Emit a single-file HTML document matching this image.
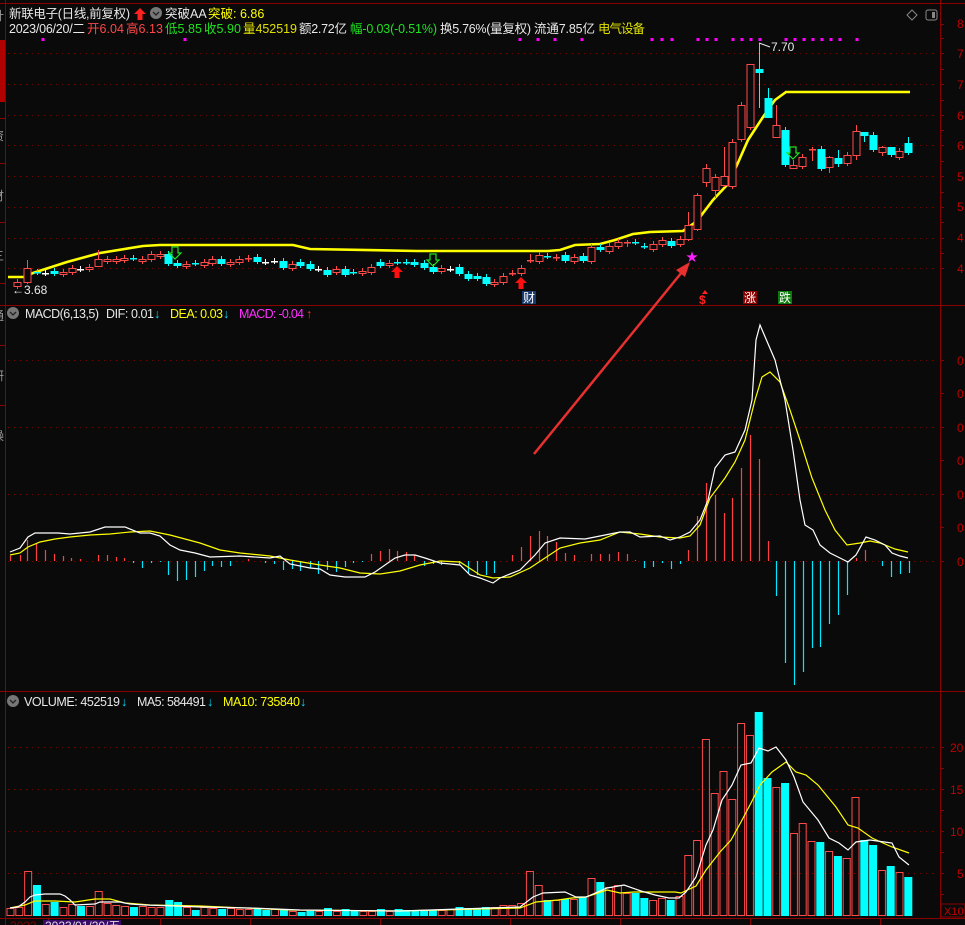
<!DOCTYPE html>
<html><head><meta charset="utf-8"><style>
html,body{margin:0;padding:0;background:#0a0a0a;}
svg{display:block;}
text{font-family:"Liberation Sans","Noto Sans CJK SC",sans-serif;}
</style></head><body>
<svg id="s" width="965" height="925" viewBox="0 0 965 925" xmlns="http://www.w3.org/2000/svg">
<rect width="965" height="925" fill="#0a0a0a"/>
<g id="grid"></g>
<g id="main"></g>
<line x1="0" y1="3.5" x2="965" y2="3.5" stroke="#8b0000"/>
<line x1="5.5" y1="0" x2="5.5" y2="925" stroke="#8b0000"/>
<line x1="940.5" y1="0" x2="940.5" y2="918" stroke="#8b0000"/>
<line x1="0" y1="305.5" x2="965" y2="305.5" stroke="#8b0000"/>
<line x1="0" y1="691.5" x2="965" y2="691.5" stroke="#8b0000"/>
<line x1="0" y1="918.5" x2="965" y2="918.5" stroke="#8b0000"/>
<rect x="0" y="40" width="5" height="62" fill="#b00000"/>
<g fill="#8b0000"><rect x="0" y="118" width="5" height="1"/><rect x="0" y="163" width="5" height="1"/><rect x="0" y="222" width="5" height="1"/><rect x="0" y="283" width="5" height="1"/><rect x="0" y="345" width="5" height="1"/><rect x="0" y="405" width="5" height="1"/></g>
<g fill="#999" font-size="12"><text x="-8" y="20">针</text><text x="-8" y="140">资</text><text x="-8" y="200">财</text><text x="-8" y="260">三</text><text x="-8" y="320">通</text><text x="-8" y="380">研</text><text x="-8" y="440">操</text></g>
<g font-size="12.5">
<text x="9" y="18" fill="#e8e8e8" textLength="121">新联电子(日线,前复权)</text>
<path d="M140 8 L146 14 L142.5 14 L142.5 20 L137.5 20 L137.5 14 L134 14 Z" fill="#ff2020"/>
<circle cx="156" cy="13" r="6" fill="#777"/><path d="M153 12 L156 15 L159 12" stroke="#222" stroke-width="1.3" fill="none"/>
<text x="165" y="18" fill="#e8e8e8">突破AA</text>
<text x="208" y="18" fill="#ffff00">突破: 6.86</text>
<text y="33"><tspan x="9" fill="#e8e8e8" textLength="76">2023/06/20/二</tspan><tspan x="87" fill="#ff4848" textLength="37">开6.04</tspan><tspan x="126" fill="#ff4848" textLength="37">高6.13</tspan><tspan x="165" fill="#20e020" textLength="37">低5.85</tspan><tspan x="204" fill="#20e020" textLength="37">收5.90</tspan><tspan x="243" fill="#e0e000" textLength="54">量452519</tspan><tspan x="299" fill="#e8e8e8" textLength="48">额2.72亿</tspan><tspan x="350" fill="#20e020" textLength="87">幅-0.03(-0.51%)</tspan><tspan x="440" fill="#e8e8e8" textLength="91">换5.76%(量复权)</tspan><tspan x="534" fill="#e8e8e8" textLength="61">流通7.85亿</tspan><tspan x="598" fill="#e0e000" textLength="47">电气设备</tspan></text>
</g>
<path d="M912 10 L917 15 L912 20 L907 15 Z" stroke="#888" fill="none"/>
<rect x="926" y="10" width="11" height="10" rx="2" stroke="#888" fill="none"/><rect x="932" y="12" width="3" height="6" fill="#888"/>
<g font-size="12.5">
<circle cx="13" cy="313" r="6" fill="#777"/><path d="M10 312 L13 315 L16 312" stroke="#222" stroke-width="1.3" fill="none"/>
<text x="25" y="318" fill="#e8e8e8" textLength="74">MACD(6,13,5)</text>
<text x="106" y="318" fill="#e8e8e8" textLength="48">DIF: 0.01</text>
<text x="154" y="318" fill="#00e0ff">↓</text>
<text x="170" y="318" fill="#ffff00" textLength="53">DEA: 0.03</text>
<text x="223" y="318" fill="#00e0ff">↓</text>
<text x="239" y="318" fill="#ff30ff" textLength="65">MACD: -0.04</text>
<text x="306" y="318" fill="#ff3030">↑</text>
<circle cx="13" cy="701" r="6" fill="#777"/><path d="M10 700 L13 703 L16 700" stroke="#222" stroke-width="1.3" fill="none"/>
<text x="24" y="706" fill="#e8e8e8" textLength="96">VOLUME: 452519</text>
<text x="121" y="706" fill="#00e0ff">↓</text>
<text x="137" y="706" fill="#e8e8e8" textLength="69">MA5: 584491</text>
<text x="207" y="706" fill="#00e0ff">↓</text>
<text x="223" y="706" fill="#ffff00" textLength="77">MA10: 735840</text>
<text x="300" y="706" fill="#00e0ff">↓</text>
</g>
<g fill="#c00000" font-size="12" font-family="Liberation Mono, monospace">
<text x="957" y="28">8</text><text x="957" y="58">7</text><text x="957" y="89">7</text><text x="957" y="120">6</text><text x="957" y="150">6</text><text x="957" y="181">5</text><text x="957" y="211">5</text><text x="957" y="242">4</text><text x="957" y="273">4</text>
<text x="957" y="365">0</text><text x="957" y="398">0</text><text x="957" y="432">0</text><text x="957" y="465">0</text><text x="957" y="499">0</text><text x="957" y="532">0</text><text x="957" y="566">0</text>
<text x="950" y="752">20</text><text x="950" y="794">15</text><text x="950" y="836">10</text><text x="957" y="878">5</text>
</g>
<rect x="941" y="904" width="24" height="13" fill="none" stroke="#8b0000"/>
<text x="944" y="915" fill="#c00000" font-size="11">X10</text>
<rect x="43" y="920" width="78" height="5" fill="#3a0a6a"/>
<text x="45" y="930" fill="#ddd" font-size="12">2023/01/20/五</text>
<text x="10" y="930" fill="#800000" font-size="12">2023</text>
<text x="12" y="294" fill="#e8e8e8" font-size="12">←3.68</text>
<path d="M759 43 L770 47" stroke="#e8e8e8"/>
<text x="771" y="51" fill="#e8e8e8" font-size="12">7.70</text>
<rect x="522" y="291" width="14" height="13" fill="#1a3a6a"/><text x="523" y="302" fill="#fff" font-size="12">财</text>
<text x="699" y="304" fill="#ff2020" font-size="12" font-weight="bold">$</text><path d="M705 290 L708 294 L702 294Z" fill="#ff2020"/>
<rect x="743" y="291" width="14" height="13" fill="#8b0000"/><text x="744" y="302" fill="#fff" font-size="12">涨</text>
<rect x="778" y="291" width="14" height="13" fill="#0a7a0a"/><text x="779" y="302" fill="#fff" font-size="12">跌</text>
<text x="686" y="261" fill="#ff20ff" font-size="12">★</text>
<line x1="534" y1="454" x2="682" y2="272" stroke="#e83030" stroke-width="2.5"/>
<path d="M690 262 L676 270 L685 277 Z" fill="#e83030"/>
</svg>
<script>
var s=document.getElementById('main');
var NS='http://www.w3.org/2000/svg';
function el(t,a){var e=document.createElementNS(NS,t);for(var k in a)e.setAttribute(k,a[k]);s.appendChild(e);return e;}
var g=document.getElementById('grid');
function gl(y){var e=document.createElementNS(NS,'line');e.setAttribute('x1',8);e.setAttribute('x2',938);e.setAttribute('y1',y+.5);e.setAttribute('y2',y+.5);e.setAttribute('stroke','#7a0000');e.setAttribute('stroke-dasharray','1 5');g.appendChild(e);}
[53,84,115,145,176,207,238,268,360,427,494,561,747,789,831,873].forEach(gl);
[24,38,53,69,84,100,115,130,145,161,176,192,207,222,238,253,268,360,393,427,460,494,527,561,747,768,789,810,831,852,873,894].forEach(function(y){el('line',{x1:940,x2:944,y1:y+.5,y2:y+.5,stroke:'#8b0000'});});
[48,160,250,380,510,620,750,880].forEach(function(x){el('line',{x1:x+.5,x2:x+.5,y1:918,y2:925,stroke:'#8b0000'});});
[43,185,520,538,555,582,652,662,672,698,707,716,733,742,751,760,786,795,804,813,822,831,840,857].forEach(function(x){el('rect',{x:x-1.5,y:38,width:3,height:3,fill:'#ff00ff'});});
el('polyline',{points:'8,277 25,277 33,273 67,262 100,253 143,246 160,245 293,245 310,249 417,251 548,251 560,250 575,245 600,244 615,240 633,234 650,232 683,231 693,224 700,217 713,200 727,185 737,165 748,140 763,117 775,100 786,92 910,92',fill:'none',stroke:'#ffff00','stroke-width':2.6});
var C=[[17,'r',282,286],[27,'r',268,282,260,284],[37,'c',272,272],[45,'w',273,273],[54,'c',271,273],[63,'r',272,274],[72,'r',268,272],[80,'w',269,269],[89,'r',267,269],[98,'r',259,266,250,267],[107,'r',259,261],[116,'r',259,261],[124,'r',258,260],[133,'c',258,258],[142,'r',259,261],[151,'r',254,259],[160,'r',254,256],[168,'c',254,263],[177,'c',263,265],[186,'r',264,266],[195,'c',263,263],[204,'r',262,265],[212,'r',259,263],[221,'c',259,263],[230,'r',262,264],[239,'r',259,262],[248,'r',258,259],[257,'c',257,261],[265,'w',262,262],[274,'w',261,261],[283,'c',261,267],[292,'r',264,268],[300,'c',262,265],[310,'c',264,268],[318,'w',269,269],[327,'c',270,274],[336,'r',269,272],[345,'c',269,274],[353,'c',272,272],[362,'r',271,273],[371,'r',267,272],[380,'c',262,265],[389,'r',263,265],[397,'c',262,262],[406,'c',262,262],[414,'c',262,264],[424,'c',263,267],[433,'c',267,271],[441,'r',268,271],[450,'w',269,269],[459,'c',267,273],[468,'c',274,278],[477,'c',276,278],
[486,'c',277,283],[494,'r',282,284],[503,'r',276,282],[512,'r',273,273],[521,'r',268,273],[530,'r',260,260,254,263],[539,'r',255,261],[547,'c',256,256],[556,'r',257,258],[565,'c',255,260],[574,'r',257,261],[583,'c',256,260],[591,'r',247,261],[600,'c',247,249],[609,'r',246,251],[618,'r',242,246],[627,'r',242,243,240,247],[635,'c',242,242],[644,'c',246,246],[653,'r',244,249],[662,'r',240,244],[671,'c',241,245],[680,'r',239,244],[688,'r',225,239,212,241],[697,'r',195,229,193,231],[706,'r',168,182,164,187],[715,'r',177,190,174,198],[724,'r',176,185,147,187],[732,'r',142,186],[741,'r',105,139],[750,'r',64,127,64,130],[759,'c',69,72,43,108],[768,'c',98,117,88,117],[776,'r',125,137,105,137],[785,'c',130,164],[793,'r',165,168,160,168],[802,'r',157,166],[812,'r',149,149,147,161],[821,'c',149,168],[829,'r',157,167,156,173],[838,'c',158,163,150,167],[847,'r',155,163],[856,'r',131,155,125,160],[864,'c',132,135,132,142],[873,'c',135,149],[882,'r',147,152,146,156],[891,'c',147,154,147,157],[899,'r',151,157,148,160],[908,'c',143,152,137,155]];
C.forEach(function(d){var x=d[0],t=d[1],a=d[2],b=d[3],wt=d[4]||(a-3),wb=d[5]||(b+3);
var col=t=='r'?'#ff4a4a':(t=='c'?'#00ffff':'#ffffff');
el('line',{x1:x+.5,x2:x+.5,y1:wt,y2:wb,stroke:col});
if(b-a<2){el('rect',{x:x-3,y:a,width:7,height:1.5,fill:col});}
else if(t=='r'){el('rect',{x:x-3,y:a+.5,width:7,height:b-a,fill:'#0a0a0a',stroke:col});}
else{el('rect',{x:x-3.5,y:a,width:8,height:b-a+1,fill:col});}
});
function gdown(x,y){el('path',{d:'M'+(x-3)+' '+y+' h6 v6 h3 l-6 6 l-6 -6 h3 z',fill:'none',stroke:'#20e020','stroke-width':1.2});}
gdown(175,247);gdown(433,254);gdown(793,147);
function rup(x,y){el('path',{d:'M'+x+' '+y+' l6 6 h-3.5 v6 h-5 v-6 h-3.5 z',fill:'#ff1010'});}
rup(397,266);rup(521,277);
var H=[[10,556],[20,555],[27,540],[36,544],[45,550],[54,554],[63,556],[71,558],[80,559],[98,555],[107,555],[116,557],[124,558],[133,563],[142,568],[151,563],[160,562],[168,575],[177,581],[186,580],[195,577],[204,571],[212,566],[221,567],[230,566],[248,559],[265,563],[274,564],[283,570],[292,569],[300,571],[310,568],[318,574],[327,570],[336,572],[345,567],[353,563],[362,562],[371,554],[380,551],[389,549],[397,551],[406,552],[414,555],[424,566],[433,564],[441,565],[450,562],[459,565],[468,573],[477,575],[486,575],[494,573],[512,555],[521,547],[530,536],[539,531],[547,536],[556,542],[565,553],[574,555],[591,554],[600,554],[609,554],[618,552],[627,554],[635,560],[644,568],[653,567],[662,563],[671,569],[680,564],[688,550],[697,516],[706,483],[715,495],[724,513],[732,498],[741,468],[750,435],[759,459],[768,541],[776,596],[785,663],[794,685],[803,672],[812,648],[820,647],[829,624],[838,615],[847,595],[856,558],[865,550],[882,566],[891,577],[900,574],[909,573]];
H.forEach(function(h){var up=h[1]<561;el('line',{x1:h[0]+.5,x2:h[0]+.5,y1:Math.min(h[1],561),y2:Math.max(h[1],561),stroke:up?'#ff4040':'#00e8ff','stroke-width':1.2});});
el('polyline',{points:'10,555 20,553 28,547 40,542 55,539 70,537 90,535 110,534 130,532 150,531 170,535 200,543 220,550 240,553 270,556 290,560 320,565 340,568 360,573 380,574 400,571 420,565 440,561 460,562 480,575 493,578 510,577 530,568 545,558 560,548 580,543 600,540 620,532 640,534 660,537 680,538 690,536 700,525 710,498 725,478 735,462 745,440 755,400 762,377 770,372 780,382 790,410 800,440 812,478 825,510 835,530 847,545 860,543 870,541 880,543 895,549 908,552',fill:'none',stroke:'#ffff00','stroke-width':1.2});
el('polyline',{points:'10,552 20,548 28,537 35,533 58,533 70,534 90,532 105,527 125,527 140,533 150,533 160,536 170,545 180,550 195,553 210,557 240,556 270,558 280,556 290,564 310,568 320,569 330,575 345,577 365,577 375,572 385,565 395,558 405,555 415,555 425,558 440,563 460,565 470,575 480,578 493,583 500,578 520,570 535,555 545,543 560,538 585,539 600,536 620,532 630,532 640,537 660,536 670,540 680,537 690,532 700,520 708,500 715,468 725,455 735,452 745,430 752,400 756,340 760,325 775,360 785,400 793,450 800,500 805,525 813,530 820,545 830,553 840,558 848,562 856,555 866,537 875,540 885,545 892,553 900,556 908,558',fill:'none',stroke:'#ffffff','stroke-width':1.2});
function bar(x,t,top){if(t=='r')el('rect',{x:x-3,y:top+.5,width:7,height:915-top,fill:'none',stroke:'#ff4a4a'});else el('rect',{x:x-3.5,y:top,width:8,height:916-top,fill:'#00ffff'});}
var VL=[['r',908],['r',907],['r',871],['c',885],['r',904],['c',902],['r',907],['r',904],['c',906],['r',906],['r',891],['r',903],['r',905],['r',906],['c',907],['r',906],['r',907],['r',907],['c',900],['c',902],['r',907],['c',910],['r',907],['r',908],['c',909],['r',908],['r',909],['r',909],['c',908],['c',910],['r',909],['c',909],['r',911],['c',912],['c',911],['r',911],['c',908],['r',911],['c',909],['c',911],['r',911],['r',911],['c',909],['r',911],['c',909]];
VL.forEach(function(v,i){bar(10+8.82*i,v[0],v[1]);});
var mid=[['c',910],['c',910],['c',910],['c',910],['r',910],['r',909]];
mid.forEach(function(v,i){bar(406+8.8*i,v[0],v[1]);});
var VR=[['c',907],['c',908],['c',908],['c',907],['r',907],['r',905],['r',905],['r',903],['r',871],['r',885],['c',900],['r',900],['c',899],['r',899],['c',897],['r',878],['c',882],['r',887],['r',885],['r',893],['c',893],['c',898],['r',900],['r',898],['c',900],['r',896],['r',855],['r',840],['r',739],['r',793],['r',771],['r',799],['r',723],['r',735],['c',712],['c',778],['r',787],['c',783],['r',833],['r',823],['r',841],['c',842],['r',851],['c',856],['r',858],['r',797],['c',840],['c',845],['r',870],['c',866],['r',872],['c',877]];
VR.forEach(function(v,i){bar(459+8.8*i,v[0],v[1]);});
el('polyline',{points:'10,908 25,905 35,901 55,901 75,902 95,899 110,899 125,903 150,905 200,906 290,910 400,911 520,908 536,902 558,900 572,898 586,897 607,890 620,893 634,892 675,892 681,893 696,886 706,870 720,852 731,840 741,822 751,803 760,785 772,772 786,762 796,772 806,775 818,785 836,807 848,825 858,828 872,838 892,847 909,853',fill:'none',stroke:'#ffff00','stroke-width':1.2});
el('polyline',{points:'10,908 18,907 25,902 30,897 35,895 45,894 60,894 65,896 70,900 75,905 95,904 100,902 120,902 130,904 145,905 175,906 200,907 250,908 300,910 400,911 520,907 533,897 543,893 565,892 576,897 586,897 600,891 607,888 624,885 641,891 655,895 669,898 679,898 686,892 696,877 706,845 713,830 722,800 732,785 741,765 751,763 759,748 768,751 776,747 786,760 794,777 803,802 818,820 829,838 839,843 848,850 856,842 870,840 892,843 899,857 909,865',fill:'none',stroke:'#ffffff','stroke-width':1.2});
</script>
</body></html>
